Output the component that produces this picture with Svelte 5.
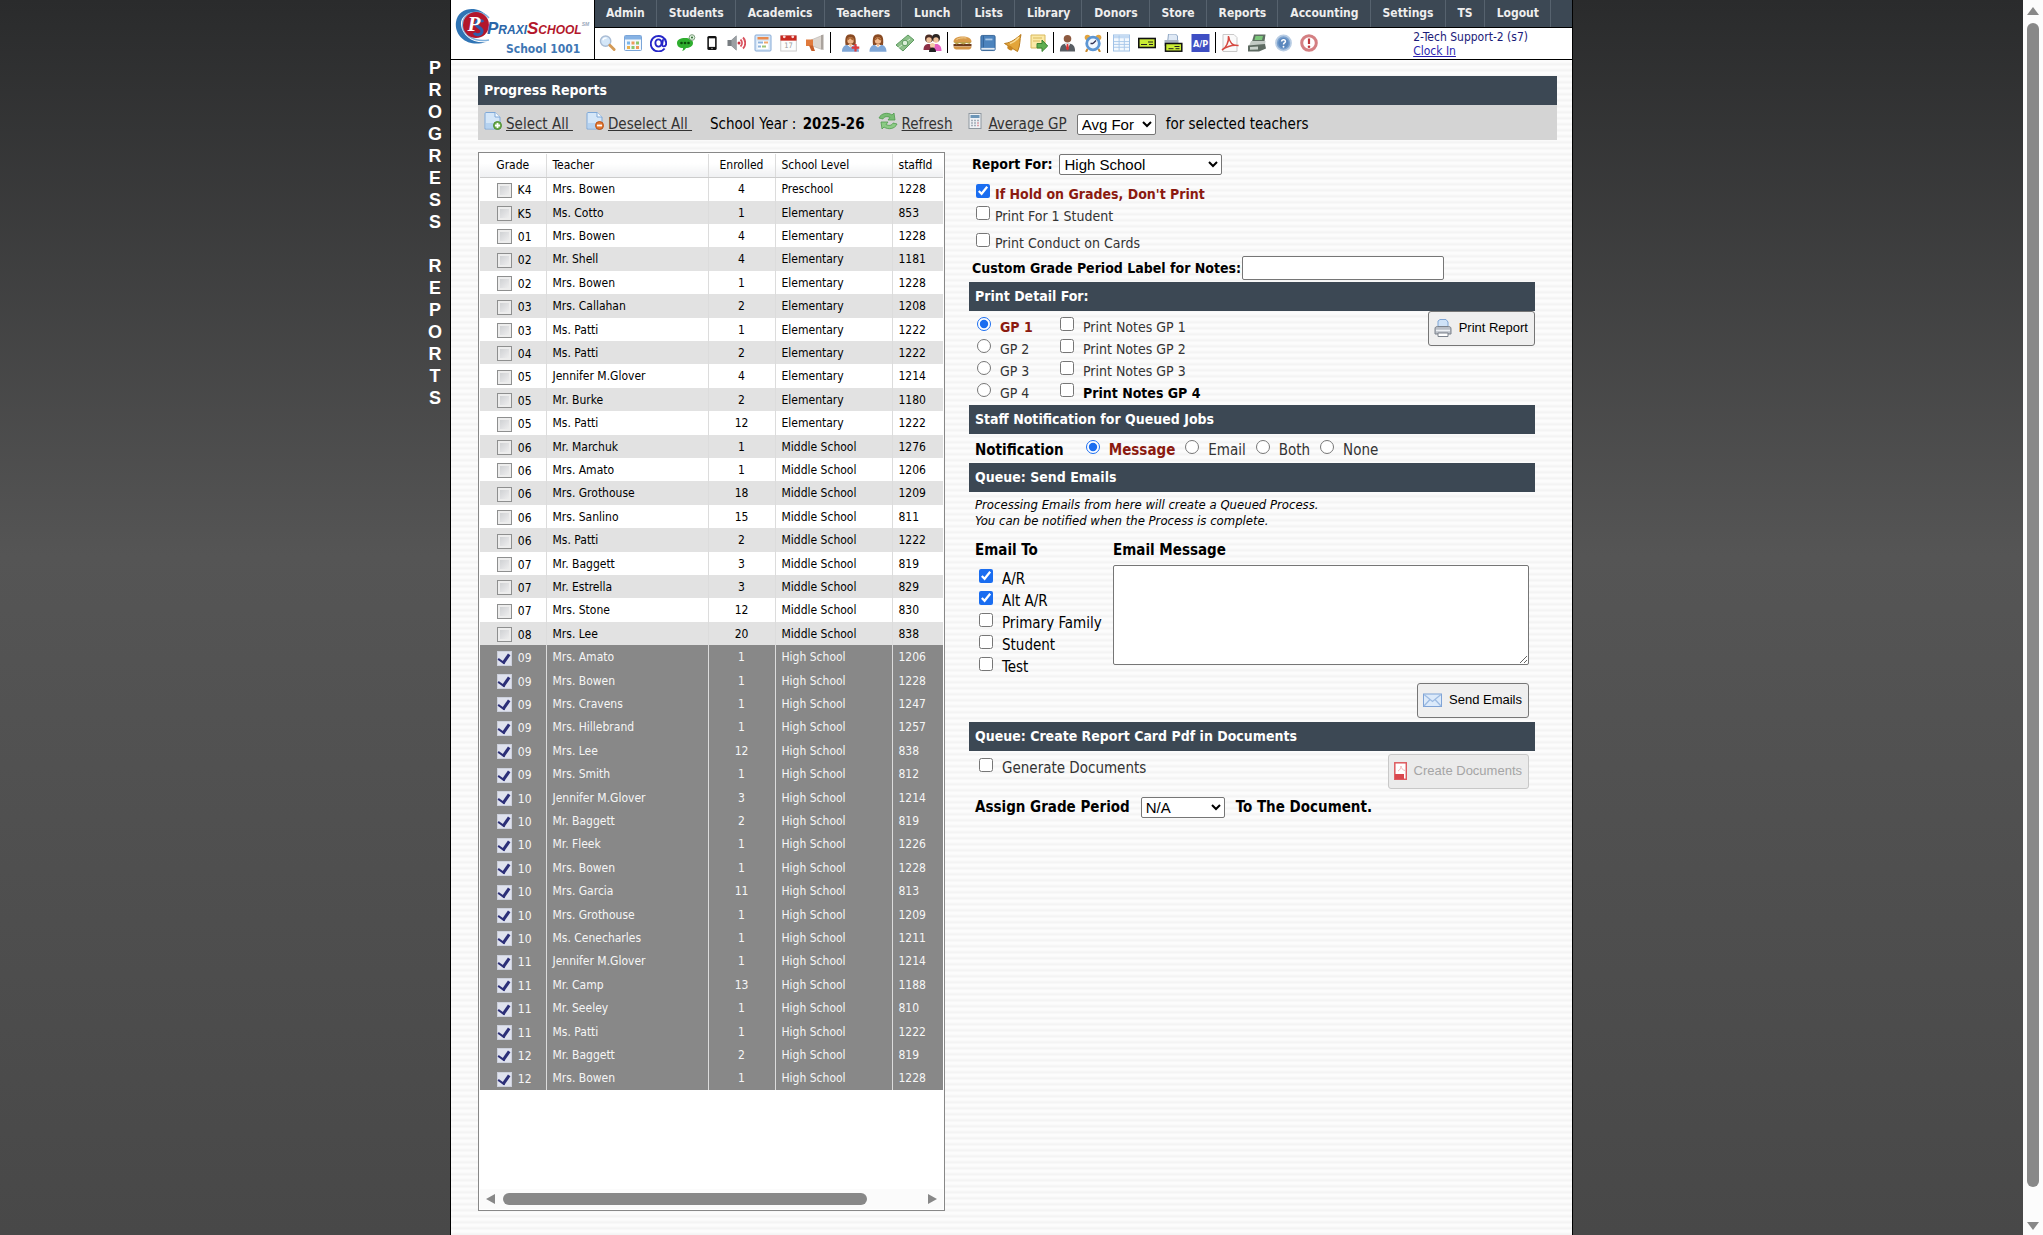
<script>
  const menu = ['Admin', 'Students', 'Academics', 'Teachers', 'Lunch', 'Lists', 'Library', 'Donors', 'Store', 'Reports', 'Accounting', 'Settings', 'TS', 'Logout'];

  // shortcut icons, grouped between the separators: [name, width]
  const shortcuts = [
    [['Search', 17], ['Dashboard', 18], ['Email', 17], ['Text', 22], ['Mobile', 14], ['Voice', 19], ['Schedule', 18], ['Calendar', 17], ['Announce', 20]],
    [['Add family', 21], ['Family', 18], ['Payments', 20], ['Groups', 19]],
    [['Lunch', 19], ['Book', 16], ['Bell', 18], ['Notes', 18]],
    [['Staff', 17], ['Clock', 18]],
    [['Ledger', 17], ['Check', 18], ['Print checks', 19], ['Payables', 19]],
    [['PDF', 18], ['Register', 20], ['Help', 17], ['Alert', 18]]
  ];

  const sideTitle = 'PROGRESS REPORTS'.split('');

  const E = 'Elementary';
  const M = 'Middle School';
  const H = 'High School';

  let teachers = $state(
    [
      ['K4', 'Mrs. Bowen', 4, 'Preschool', 1228],
      ['K5', 'Ms. Cotto', 1, E, 853],
      ['01', 'Mrs. Bowen', 4, E, 1228],
      ['02', 'Mr. Shell', 4, E, 1181],
      ['02', 'Mrs. Bowen', 1, E, 1228],
      ['03', 'Mrs. Callahan', 2, E, 1208],
      ['03', 'Ms. Patti', 1, E, 1222],
      ['04', 'Ms. Patti', 2, E, 1222],
      ['05', 'Jennifer M.Glover', 4, E, 1214],
      ['05', 'Mr. Burke', 2, E, 1180],
      ['05', 'Ms. Patti', 12, E, 1222],
      ['06', 'Mr. Marchuk', 1, M, 1276],
      ['06', 'Mrs. Amato', 1, M, 1206],
      ['06', 'Mrs. Grothouse', 18, M, 1209],
      ['06', 'Mrs. Sanlino', 15, M, 811],
      ['06', 'Ms. Patti', 2, M, 1222],
      ['07', 'Mr. Baggett', 3, M, 819],
      ['07', 'Mr. Estrella', 3, M, 829],
      ['07', 'Mrs. Stone', 12, M, 830],
      ['08', 'Mrs. Lee', 20, M, 838],
      ['09', 'Mrs. Amato', 1, H, 1206],
      ['09', 'Mrs. Bowen', 1, H, 1228],
      ['09', 'Mrs. Cravens', 1, H, 1247],
      ['09', 'Mrs. Hillebrand', 1, H, 1257],
      ['09', 'Mrs. Lee', 12, H, 838],
      ['09', 'Mrs. Smith', 1, H, 812],
      ['10', 'Jennifer M.Glover', 3, H, 1214],
      ['10', 'Mr. Baggett', 2, H, 819],
      ['10', 'Mr. Fleek', 1, H, 1226],
      ['10', 'Mrs. Bowen', 1, H, 1228],
      ['10', 'Mrs. Garcia', 11, H, 813],
      ['10', 'Mrs. Grothouse', 1, H, 1209],
      ['10', 'Ms. Cenecharles', 1, H, 1211],
      ['11', 'Jennifer M.Glover', 1, H, 1214],
      ['11', 'Mr. Camp', 13, H, 1188],
      ['11', 'Mr. Seeley', 1, H, 810],
      ['11', 'Ms. Patti', 1, H, 1222],
      ['12', 'Mr. Baggett', 2, H, 819],
      ['12', 'Mrs. Bowen', 1, H, 1228]
    ].map(([grade, name, enrolled, level, staffId]) => ({ grade, name, enrolled, level, staffId, selected: level === H }))
  );

  let period = $state(1);
  let notify = $state('Message');
  let hold = $state(true);
  let generate = $state(false);
  let emailTo = $state([
    { name: 'A/R', on: true },
    { name: 'Alt A/R', on: true },
    { name: 'Primary Family', on: false },
    { name: 'Student', on: false },
    { name: 'Test', on: false }
  ]);

  function selectAll(e, value) {
    e.preventDefault();
    teachers.forEach((t) => (t.selected = value));
  }
</script>

{#snippet glyph(name)}
  {#if name === 'Search'}
    <circle cx="7" cy="7" r="5.5" fill="#d3e6f8" stroke="#a9bcd4" stroke-width="1.5" />
    <path d="M4 6a3.5 3.5 0 0 1 4-2" stroke="#fff" stroke-width="1.5" fill="none" />
    <path d="M11.5 11.5l4.500 4.500" stroke="#d49a55" stroke-width="3" stroke-linecap="round" />
  {:else if name === 'Dashboard'}
    <rect x=".5" y="1.5" width="17" height="15" rx="1" fill="#f3f8fd" stroke="#7ba5d8" />
    <rect x="1" y="2" width="16" height="3.5" fill="#86b2e4" />
    <path d="M3 7.500h3v3H3z" fill="#7cb7e8" /><path d="M7.500 7.500h3v3h-3z" fill="#ef9a5a" /><path d="M12 7.500h3v3h-3z" fill="#8cc56c" />
    <path d="M3 12h3v3H3z" fill="#e9b14c" /><path d="M7.500 12h3v3h-3z" fill="#8cc56c" /><path d="M12 12h3v3h-3z" fill="#ef9a5a" />
  {:else if name === 'Email'}
    <path d="M15.500 14.800A8.200 8.200 0 1 1 17.200 9c0 2-1 3.600-2.500 3.600-1.400 0-2-1-1.700-2.600l.8-4.800" fill="none" stroke="#2626c8" stroke-width="2" />
    <ellipse cx="9" cy="9" rx="3.300" ry="3.800" fill="none" stroke="#2626c8" stroke-width="2" />
  {:else if name === 'Text'}
    <path d="M0 9c0-3.500 3.500-5 8-5s8 1.500 8 5-3.500 5-7 5c-1 2-3 3-4 3 1-1 1-2 1-3-4 0-6-2-6-5z" fill="#2fae2f" />
    <circle cx="4.500" cy="9" r="1.300" fill="#0b4f0b" /><circle cx="8" cy="9" r="1.300" fill="#0b4f0b" /><circle cx="11.500" cy="9" r="1.300" fill="#0b4f0b" />
    <circle cx="15" cy="3.500" r="2.800" fill="#dff2df" stroke="#7d9c7d" /><circle cx="15" cy="3.500" r="1" fill="#2a6b2a" />
  {:else if name === 'Mobile'}
    <rect x="3" y="0" width="12" height="18" rx="2" fill="#111" /><rect x="5" y="3" width="8" height="11" fill="#fff" /><circle cx="9" cy="16" r=".9" fill="#bbb" />
  {:else if name === 'Voice'}
    <path d="M0 6h4l5-4.500v15L4 12H0z" fill="#777c80" /><path d="M4 6l5-4.500v15L4 12z" fill="#9a9fa3" />
    <circle cx="11.500" cy="9" r="1.500" fill="#c8303e" />
    <path d="M13 5.500c2 2 2 5 0 7M15.500 3.500c3 3 3 8 0 11" fill="none" stroke="#d8505c" stroke-width="1.800" />
  {:else if name === 'Schedule'}
    <rect x="1" y="1" width="16" height="16" rx="1" fill="#d8e7f7" stroke="#86aad6" />
    <rect x="3.500" y="3" width="11" height="2.500" fill="#e98a4e" />
    <path d="M3.500 7h11v8h-11z" fill="#fff" /><path d="M4 7.500h5v2H4zM4 11.500h3v2H4z" fill="#8fb3dc" /><path d="M10 7.500h4v2h-4z" fill="#efa66c" /><path d="M8 11.500h4v2H8z" fill="#9cc477" />
  {:else if name === 'Calendar'}
    <rect x=".8" y="1.500" width="16.500" height="16" fill="#fdfdfd" stroke="#c9c9c9" />
    <rect x=".5" y="1" width="17" height="5.500" fill="#c8281f" />
    <circle cx="4.500" cy="2.500" r="1.500" fill="#f8d7d5" /><circle cx="13.500" cy="2.500" r="1.500" fill="#f8d7d5" />
    <text x="9" y="14.500" font-size="8" text-anchor="middle" fill="#999">17</text>
  {:else if name === 'Announce'}
    <path d="M5 6L16 1.500v14L5 11.500z" fill="#dcd6d0" stroke="#b9b2ab" stroke-width=".6" /><path d="M0 5.500h7V12H0z" fill="#e07a3c" /><path d="M3 11.500h4l2 5.500H5.500z" fill="#c65e28" />
    <path d="M15 1.200l2.500-.8v15.500L15 15z" fill="#aaa39d" />
  {:else if name === 'Add family' || name === 'Family'}
    <path d="M4 11C3 3 5 .3 9 .3S15 3 14 11z" fill="#8a4a22" />
    <circle cx="9" cy="6.500" r="3.200" fill="#f0b98d" /><path d="M5.500 6.500C6 2 12 2 12.500 6.500c-2-.3-3-1.300-4-2.300-.6 1-1.800 2-3 2.300z" fill="#a8622f" />
    <path d="M.5 17.700c0-5 3-6.700 5-7L9 13.500l3.500-2.800c2 .3 5 2 5 7z" fill="#7fa6d6" /><path d="M7 10h4l-2 3.200z" fill="#f0b98d" />
    {#if name === 'Add family'}<path d="M14 10v7.500M10.200 13.700h7.600" stroke="#e03a3a" stroke-width="2.200" />{/if}
  {:else if name === 'Payments'}
    <path d="M0 11L12 1l6 5L7 17z" fill="#8dc08a" stroke="#5d9a60" /><path d="M2 14L14 5" stroke="#d5ecd3" /><circle cx="9" cy="9" r="2.800" fill="#dcefda" stroke="#5d9a60" />
  {:else if name === 'Groups'}
    <circle cx="5.500" cy="4.500" r="4" fill="#4a2b22" /><circle cx="12.500" cy="4" r="4" fill="#2b2522" /><circle cx="5.500" cy="6" r="2.700" fill="#eec09a" /><circle cx="12.500" cy="6" r="2.700" fill="#eec09a" />
    <path d="M0 16c0-5 2.500-6 5.500-6S10 12 10 16z" fill="#8c2f45" /><path d="M9 17c0-6 1.500-7 4-7s5 2 5 7z" fill="#e45fc0" /><circle cx="9" cy="11.500" r="2.500" fill="#f3cda8" /><path d="M5.500 18c0-3 1.500-4.500 3.500-4.500s3.500 1.500 3.500 4.500z" fill="#222" />
  {:else if name === 'Lunch'}
    <path d="M0 8c0-4 4-5.500 9-5.500S18 4 18 8z" fill="#d89a4a" /><path d="M3 5.500C5 4 9 3.500 13 4" stroke="#f2cf90" fill="none" />
    <rect x="0" y="10" width="18" height="2.300" fill="#6b3a1c" /><path d="M0 8h18l-2 2-3-1-3 1.500L6 9l-3 1.500z" fill="#b9a04a" /><path d="M0 12.500h18c0 2.500-2 3-4 3H4c-2 0-4-.5-4-3z" fill="#d39445" />
  {:else if name === 'Book'}
    <rect x="1" y=".5" width="16" height="17" rx="1.500" fill="#4c83bd" stroke="#2f5f93" /><path d="M3.800 1v13" stroke="#2f5f93" /><rect x="1.500" y="14.500" width="15" height="2" fill="#e3eaf2" /><rect x="6" y="4" width="8" height="2" fill="#a9c8e8" />
  {:else if name === 'Bell'}
    <path d="M17 .5c-1.500 5-.5 11-3.500 17L.5 9.500C8 8.500 12 4.500 17 .5z" fill="#e3a53a" stroke="#b87a1c" /><ellipse cx="6" cy="14" rx="3" ry="2" fill="#c98622" transform="rotate(30 6 14)" /><path d="M6 9.500c4-1 7-4 9-6.500" stroke="#f9dc94" stroke-width="1.500" fill="none" />
  {:else if name === 'Notes'}
    <path d="M1 1h14v13H1z" fill="#fbe9a6" stroke="#d9b95c" /><path d="M3 4h9M3 7h7" stroke="#d9b95c" /><path d="M7 9.500h5V6l5.700 6-5.700 5.500V14H7z" fill="#5fae50" stroke="#3b8332" />
  {:else if name === 'Staff'}
    <circle cx="9" cy="4.500" r="4" fill="#8d5a40" /><path d="M1 18c0-6 2-8.500 8-8.500s8 2.500 8 8.500z" fill="#585d63" /><path d="M6 9.500h6L9 15z" fill="#fff" /><path d="M8.200 10h1.600l.8 5L9 17l-1.600-2z" fill="#d33" />
  {:else if name === 'Clock'}
    <circle cx="3.500" cy="3.500" r="2.800" fill="#e2a43f" /><circle cx="14.500" cy="3.500" r="2.800" fill="#e2a43f" /><path d="M3.500 15l-1.500 3M14.500 15l1.500 3" stroke="#c98a2e" stroke-width="2" />
    <circle cx="9" cy="9.500" r="6.300" fill="#f2f8ff" stroke="#5d96d3" stroke-width="2.800" /><path d="M9 9.500l3-3M9 9.500H6.500" stroke="#335" stroke-width="1.300" />
  {:else if name === 'Ledger'}
    <rect x=".5" y=".5" width="17" height="17" fill="#f4f9fe" stroke="#9cbfe6" /><path d="M1 1h16v3H1z" fill="#c3daf3" /><path d="M1 7.500h16M1 10.500h16M1 13.500h16M6.500 1v16M12 4v13" stroke="#a9c8ea" />
  {:else if name === 'Check'}
    <rect x=".8" y="4.500" width="16.500" height="9" fill="#cbed35" stroke="#111" stroke-width="1.600" /><path d="M10 8h5M3 10.500h6M11 10.500h4" stroke="#222" stroke-width="1.200" />
  {:else if name === 'Print checks'}
    <path d="M4 0h7l2 2v7H3z" fill="#dfe9f5" stroke="#8fa6c4" /><path d="M0 6h14v6H0z" fill="#a7b1bf" /><rect x="1" y="9.500" width="16.300" height="7.700" fill="#cbed35" stroke="#111" stroke-width="1.500" /><path d="M10 12.500h5M4 14.700h5M11 14.700h4" stroke="#222" />
  {:else if name === 'Payables'}
    <rect x="0" y="0" width="18" height="18" fill="#3f4fc4" /><text x="9" y="12.500" font-size="9" font-weight="700" text-anchor="middle" fill="#fff">A/P</text>
  {:else if name === 'PDF'}
    <path d="M2 .5h11l3 3v14H2z" fill="#fafafa" stroke="#c9c9c9" /><path d="M1 16c4-2 7-8 6.500-14 1 7 5 10 10 9.500-6-1-11 .5-16.500 4.500z" fill="none" stroke="#d64a42" stroke-width="1.500" />
  {:else if name === 'Register'}
    <path d="M6 .5h11.500l-1 7H4z" fill="#5f6f63" /><path d="M7.500 2H15l-1 4H6.500z" fill="#7bc67a" /><path d="M3 7h14.500L17 11 1 12z" fill="#c3cac5" /><path d="M0 11.500L17 10l1 4.500-7 3H0z" fill="#5e6b62" /><path d="M2 13l8-.5v3L2 15.700z" fill="#c9d1cb" />
  {:else if name === 'Help'}
    <circle cx="9" cy="9" r="8" fill="#7ba2cf" stroke="#b9cde4" stroke-width="1.800" /><circle cx="9" cy="9" r="5.500" fill="#5b88be" /><path d="M7 7.500C7 4.500 11.500 5 11 7.500c-.3 1.500-2 1.500-2 3" stroke="#fff" stroke-width="1.600" fill="none" /><circle cx="9" cy="13" r="1" fill="#fff" />
  {:else if name === 'Alert'}
    <circle cx="9" cy="9" r="7.300" fill="#fff" stroke="#d47f82" stroke-width="3" /><path d="M9 4.500v5.500" stroke="#c0393d" stroke-width="2.200" /><circle cx="9" cy="12.800" r="1.300" fill="#c0393d" />
  {/if}
{/snippet}

{#snippet pageIcon(minus)}
  <svg class="tool-icon" viewBox="0 0 18 18" aria-hidden="true">
    <path d="M1 1.500C1 1 1.500.5 2 .5h9L16 5v12H1z" fill="#d4e6f8" stroke="#7ea8d8" />
    <path d="M11 .5V5h5" fill="#f5faff" stroke="#7ea8d8" />
    <path d="M2 11h13v5H2z" fill="#b5d2f0" />
    <circle cx="13.500" cy="13.500" r="4" fill={minus ? '#e2762f' : '#6fae4c'} stroke={minus ? '#b9541a' : '#4b8a32'} />
    <path d={minus ? 'M11 13.500h5' : 'M11 13.500h5M13.500 11v5'} stroke="#fff" stroke-width="1.800" />
  </svg>
{/snippet}

<div class="page">
  <aside class="side">
    {#each sideTitle as letter}<span>{letter}</span>{/each}
  </aside>

  <div class="sheet">
    <header>
      <div class="logo">
        <svg viewBox="0 0 40 44" aria-hidden="true">
          <path d="M33 10C24-1 4 1 2 16c-2 14 12 26 30 20-12 2-24-6-25-17C6 8 20 2 33 10z" fill="#2f74b5" />
          <path d="M35 12C28 4 12 4 9 15c-3 12 10 22 26 19" fill="none" stroke="#7fb0dc" stroke-width="1.500" />
          <circle cx="22" cy="19" r="13" fill="#b3172c" />
          <path d="M20 27c2 3 8 2 8-2s-7-4-6-8 6-3 7-1" fill="none" stroke="#2d5fae" stroke-width="3" />
          <text x="20" y="25" font-size="21" font-style="italic" font-weight="700" font-family="Liberation Serif, serif" text-anchor="middle" fill="#fff">P</text>
        </svg>
        <div class="brand">
          <span class="brand-name">Praxi<b>School</b><sup>SM</sup></span>
          <span class="school">School 1001</span>
        </div>
      </div>
      <div class="bars">
        <nav>
          {#each menu as item}<a href="#{item}">{item}</a>{/each}
        </nav>
        <div class="shortcuts">
          {#each shortcuts as group, g}
            <div class="group" class:wide={g === 1}>
              {#each group as [name, width]}
                <a href="#{name}" title={name} aria-label={name}>
                  <svg viewBox="0 0 18 18" {width} height="18">{@render glyph(name)}</svg>
                </a>
              {/each}
            </div>
          {/each}
          <div class="user">
            <span>2-Tech Support-2 (s7)</span>
            <a href="#clock">Clock In</a>
          </div>
        </div>
      </div>
    </header>

    <main>
      <h1>Progress Reports</h1>
      <div class="toolbar">
        <a href="#all" class="first" onclick={(e) => selectAll(e, true)}>{@render pageIcon(false)}<u>Select All&nbsp;</u></a>
        <a href="#none" class="second" onclick={(e) => selectAll(e, false)}>{@render pageIcon(true)}<u>Deselect All&nbsp;</u></a>
        <span class="year">School Year : <b>2025-26</b></span>
        <a href="#refresh">
          <svg class="tool-icon refresh" viewBox="0 0 20 18" aria-hidden="true">
            <path d="M1 6c2-5 9-6 13-3l2-2 1 7h-7l2-2.500C9 4 6 4.500 5 7z" fill="#79bd74" stroke="#4f9a4c" stroke-width=".8" />
            <path d="M19 12c-2 5-9 6-13 3l-2 2-1-7h7l-2 2.500c3 1.500 6 1 7-1.500z" fill="#8ccb85" stroke="#4f9a4c" stroke-width=".8" />
          </svg>
          <u>Refresh</u>
        </a>
        <a href="#average" class="average">
          <svg class="tool-icon calc" viewBox="0 0 13 16" aria-hidden="true">
            <rect x=".5" y=".5" width="12" height="15" fill="#eef1f5" stroke="#8e979f" />
            <rect x="2" y="2" width="9" height="3" fill="#6d96b8" />
            <path d="M2.500 7.500h2M5.500 7.500h2M8.500 7.500h2M2.500 10h2M5.500 10h2M2.500 12.500h2M5.500 12.500h2" stroke="#a3adb8" stroke-width="1.300" />
            <path d="M8.500 10h2M8.500 12.500h2" stroke="#d9a0a8" stroke-width="1.300" />
          </svg>
          <u>Average GP</u>
        </a>
        <select class="avg" aria-label="Average for"><option>Avg For</option></select>
        <span class="after">for selected teachers</span>
      </div>

      <div class="columns">
        <section class="list">
          <table>
            <colgroup><col class="c-grade" /><col class="c-teacher" /><col class="c-enrolled" /><col class="c-level" /><col /></colgroup>
            <thead>
              <tr><th class="mid">Grade</th><th>Teacher</th><th class="mid">Enrolled</th><th>School Level</th><th>staffId</th></tr>
            </thead>
            <tbody>
              {#each teachers as t}
                <tr class:selected={t.selected}>
                  <td><label><input type="checkbox" bind:checked={t.selected} />{t.grade}</label></td>
                  <td>{t.name}</td>
                  <td class="mid">{t.enrolled}</td>
                  <td>{t.level}</td>
                  <td>{t.staffId}</td>
                </tr>
              {/each}
            </tbody>
          </table>
          <div class="hscroll" aria-hidden="true">
            <svg viewBox="0 0 9 12"><path d="M9 1v10L0 6z" /></svg>
            <div class="track"><div class="thumb"></div></div>
            <svg viewBox="0 0 9 12"><path d="M0 1v10l9-5z" /></svg>
          </div>
        </section>

        <form class="options" onsubmit={(e) => e.preventDefault()}>
          <div class="report-for">
            <label for="report-for">Report For:</label>
            <select id="report-for" class="level"><option>High School</option></select>
          </div>
          <div class="flags">
            <label class="opt" class:on={hold}><input type="checkbox" bind:checked={hold} />If Hold on Grades, Don't Print</label>
            <label class="opt"><input type="checkbox" />Print For 1 Student</label>
            <label class="opt spaced"><input type="checkbox" />Print Conduct on Cards</label>
          </div>
          <div class="custom">
            <label for="custom-label">Custom Grade Period Label for Notes:</label>
            <input id="custom-label" type="text" />
          </div>

          <h2>Print Detail For:</h2>
          <div class="detail">
            <div class="stack">
              {#each [1, 2, 3, 4] as n}
                <label class="opt" class:on={period === n}><input type="radio" name="period" value={n} bind:group={period} />GP {n}</label>
              {/each}
            </div>
            <div class="stack notes">
              {#each [1, 2, 3, 4] as n}
                <label class="opt" class:strong={n === 4}><input type="checkbox" />Print Notes GP {n}</label>
              {/each}
            </div>
            <button type="button">
              <svg viewBox="0 0 18 18" width="18" height="18" aria-hidden="true">
                <path d="M4 8V2l2-1.500h6L14 3v5z" fill="#cfe2f7" stroke="#7fa5d4" />
                <path d="M1 10c0-2 1-2.500 2.500-2.500h11C16 7.500 17 8 17 10v5H1z" fill="#b9bec6" stroke="#7c838d" />
                <path d="M2 11.500h14" stroke="#eef1f5" stroke-width="1.500" /><path d="M4 14h10v3.500H4z" fill="#fff" stroke="#7c838d" />
              </svg>
              Print Report
            </button>
          </div>

          <h2>Staff Notification for Queued Jobs</h2>
          <div class="notify">
            <b>Notification</b>
            {#each ['Message', 'Email', 'Both', 'None'] as kind}
              <label class="opt" class:on={notify === kind}><input type="radio" name="notify" value={kind} bind:group={notify} />{kind}</label>
            {/each}
          </div>

          <h2>Queue: Send Emails</h2>
          <p>Processing Emails from here will create a Queued Process.<br />You can be notified when the Process is complete.</p>
          <div class="emails">
            <b>Email To</b>
            <label for="message"><b>Email Message</b></label>
            <div class="stack recipients">
              {#each emailTo as r}
                <label class="opt"><input type="checkbox" bind:checked={r.on} />{r.name}</label>
              {/each}
            </div>
            <textarea id="message"></textarea>
          </div>
          <div class="send">
            <button type="button">
              <svg viewBox="0 0 19 18" width="19" height="18" aria-hidden="true">
                <rect x=".5" y="3" width="18" height="12.500" fill="#dceafa" stroke="#7fa3d6" /><path d="M1 3.500l8.500 7 8.500-7M1 15l6-6.500M18 15l-6-6.500" fill="none" stroke="#9dbbe2" stroke-width="1.300" />
              </svg>
              Send Emails
            </button>
          </div>

          <h2>Queue: Create Report Card Pdf in Documents</h2>
          <div class="generate">
            <label class="opt"><input type="checkbox" bind:checked={generate} />Generate Documents</label>
            <button type="button" disabled={!generate}>
              <svg viewBox="0 0 13 18" width="13" height="18" aria-hidden="true">
                <rect x=".8" y=".8" width="11.500" height="16.500" fill="#fff" stroke="#dd5a5f" stroke-width="1.500" /><path d="M1 12h9v5H1z" fill="#d9474d" /><path d="M4 9c2-1 3-3 3-5 0 2 1.500 4 4 4.500" fill="none" stroke="#f1b9bb" />
              </svg>
              Create Documents
            </button>
          </div>
          <div class="assign">
            <label for="assign">Assign Grade Period</label>
            <select id="assign"><option>N/A</option></select>
            <b>To The Document.</b>
          </div>
        </form>
      </div>
    </main>
  </div>

  <div class="vscroll" aria-hidden="true">
    <svg viewBox="0 0 12 10"><path d="M6 1l6 8H0z" /></svg>
    <div class="thumb"></div>
    <svg viewBox="0 0 12 10"><path d="M6 9L0 1h12z" /></svg>
  </div>
</div>

<style>
  :global(body) { margin: 0; }
  .page {
    --bar: #3c4854;
    --red: #8b1a10;
    --ui: 'DejaVu Sans Condensed', Tahoma, 'DejaVu Sans', sans-serif;
    --form: 'Liberation Sans', Arial, sans-serif;
    display: grid;
    grid-template-columns: 1fr minmax(0, 1123px) 1fr 20px;
    min-height: 100vh;
    font: 14px/22px var(--ui);
    color: #000;
    background: linear-gradient(#2a2b2c, #555 45%, #484848);
  }
  .page * { box-sizing: border-box; }

  .side {
    display: flex;
    flex-direction: column;
    align-items: flex-end;
    padding: 57px 8px 0 0;
    color: #fff;
    font: bold 18px/22px var(--form);
  }
  .side span { width: 14px; height: 22px; text-align: center; }

  .sheet {
    grid-column: 2;
    border: solid #000;
    border-width: 0 1px;
    background: repeating-linear-gradient(#fcfcfc 0 2px, #f4f4f4 4px 5px, #fcfcfc 6px);
  }

  header { display: flex; height: 60px; background: #fff; border-bottom: 1px solid #000; }
  .logo { display: flex; flex: none; width: 144px; padding: 6px 0 0 3px; border-right: 1px solid #000; }
  .logo svg { flex: none; width: 40px; height: 44px; }
  .brand { display: flex; flex-direction: column; align-items: flex-end; margin-left: -7px; padding-top: 13px; }
  .brand-name { color: #2b66a8; font: italic bold 17px/20px var(--form); font-variant: small-caps; white-space: nowrap; }
  .brand-name b { color: #b3172c; }
  .brand-name sup { font-size: 5px; color: #9ab; line-height: 1px; vertical-align: 8px; }
  .school { padding-right: 9px; color: #3f77b4; font-size: 12px; line-height: 20px; font-weight: bold; }

  .bars { flex: 1; min-width: 0; }
  nav { display: flex; gap: 1px; height: 28px; background: var(--bar); border-bottom: 1px solid #000; }
  nav a { padding: 0 11px; border-right: 1px solid #56626e; color: #eee; font-size: 12px; line-height: 27px; font-weight: bold; text-decoration: none; }
  .shortcuts { display: flex; align-items: center; height: 29px; padding-left: 4px; }
  .group { display: flex; align-items: center; gap: 8px; height: 21px; }
  .group + .group { margin-left: 5px; padding-left: 5px; border-left: 1px solid #000; }
  .group.wide { padding-left: 9px; }
  .group a { display: flex; }
  .user { display: flex; flex-direction: column; margin: 2px 44px 0 auto; color: #1a1a78; font-size: 12px; line-height: 14px; }
  .user a { color: #2a1fb0; }

  main { padding: 16px 15px 0 27px; }
  h1, h2 { margin: 0; padding-left: 6px; background: var(--bar); color: #fff; font-size: 14px; line-height: 29px; font-weight: bold; }
  .toolbar { display: flex; align-items: center; height: 35px; padding: 3px 6px 0; background: #d4d4d4; font-size: 15px; white-space: nowrap; }
  .toolbar a { display: flex; align-items: center; gap: 4px; color: #333; text-decoration: none; }
  .tool-icon { width: 18px; height: 18px; margin-bottom: 6px; }
  .tool-icon.refresh { width: 20px; }
  .tool-icon.calc { width: 14px; height: 16px; margin-right: 2px; }
  .first { margin-right: 13px; }
  .second { margin-right: 18px; }
  .year { margin-right: 13px; }
  .year b { margin-left: 2px; }
  .average { margin-left: 16px; }
  .avg { width: 79px; margin: 0 10px; }

  .columns { display: flex; align-items: flex-start; gap: 24px; padding-top: 12px; }
  .list { display: flex; flex-direction: column; flex: none; width: 467px; min-height: 1059px; padding: 1px; border: 1px solid #888; background: #fff; }
  table { width: 100%; border-collapse: collapse; table-layout: fixed; font-size: 12px; line-height: 16px; }
  .c-grade { width: 66px; }
  .c-teacher { width: 162px; }
  .c-enrolled { width: 67px; }
  .c-level { width: 117px; }
  th, td { padding: 0 0 0 6px; border-right: 1px solid #dcdcdc; text-align: left; font-weight: normal; }
  th:last-child, td:last-child { border-right: 0; }
  th { height: 23px; background: linear-gradient(#fff 40%, #eff0f2); border-bottom: 1px solid #ccc; }
  .mid { padding: 0; text-align: center; }
  tbody tr { height: 23px; }
  tbody tr:nth-child(5n + 1), tbody tr:nth-child(5n + 4) { height: 24px; }
  tbody tr:nth-child(even) { background: #e2e2e2; }
  tbody tr.selected { background: #888; color: #f6f6f6; }
  td label { display: flex; align-items: center; justify-content: flex-end; gap: 6px; padding: 2px 14px 0 0; }
  td input {
    appearance: none;
    display: grid;
    place-items: center;
    width: 15px;
    height: 15px;
    margin: 0;
    border: 1px solid #8e8f8f;
    background: linear-gradient(135deg, #c9cbce, #f4f4f4);
    box-shadow: inset 0 0 0 2px #ededed;
  }
  td input:checked { border-color: #ccd0dc; background: #dfe2ee; box-shadow: none; }
  td input:checked::after { content: ''; width: 5px; height: 9px; margin-bottom: 3px; border: solid #2c2f78; border-width: 0 3px 2px 0; transform: rotate(35deg); }

  .hscroll { display: flex; align-items: center; gap: 8px; margin-top: auto; height: 20px; padding: 0 6px; background: #fbfbfb; }
  .hscroll svg { width: 9px; height: 12px; fill: #888; }
  .hscroll .track { flex: 1; padding-right: 53px; }
  .thumb { height: 12px; border-radius: 6px; background: #888; }

  .options { flex: 1; min-width: 0; margin-right: 22px; padding-top: 1px; }
  select { height: 21px; margin: 0; border: 1px solid #767676; border-radius: 2px; background: #fff; color: #000; font: 15px var(--form); }
  .report-for, .custom { display: flex; align-items: center; padding-left: 3px; font-weight: bold; }
  .report-for { gap: 7px; }
  .level { width: 163px; }
  .flags { display: flex; flex-direction: column; margin: 8px 0 2px; padding-left: 7px; }
  .opt { display: flex; align-items: center; gap: 5px; height: 22px; color: #333; white-space: nowrap; }
  .opt input { flex: none; width: 14px; height: 14px; margin: 0 0 6px; accent-color: #1a6df0; }
  .opt.on { color: var(--red); font-weight: bold; }
  .opt.strong { color: #000; font-weight: bold; }
  .opt.spaced { margin: 5px 0 0; }
  .custom { gap: 1px; margin-bottom: 2px; }
  .custom input { width: 202px; height: 24px; border: 1px solid #767676; border-radius: 2px; background: #fff; }

  .detail { display: flex; align-items: flex-start; padding-left: 8px; }
  .stack { padding: 5px 0 1px; }
  .stack .opt { gap: 9px; }
  .detail .stack:first-child { width: 83px; }
  .detail button { margin-left: auto; }
  button { display: flex; align-items: center; gap: 7px; height: 35px; padding: 0 6px 2px 5px; border: 1px solid #767676; border-radius: 3px; background: #efefef; color: #000; font: 13px var(--form); white-space: nowrap; }
  button:disabled { border-color: #c8c8c8; background: #ebebeb; color: #a5a5a5; }
  .notify { display: flex; align-items: center; gap: 10px; height: 29px; padding: 2px 0 0 6px; font-size: 15px; }
  .notify b { margin-right: 12px; }
  .notify .opt { gap: 9px; }
  p { margin: 0; padding: 5px 6px 11px; font-size: 13px; line-height: 16px; font-style: italic; }
  .emails { display: grid; grid-template-columns: 138px 1fr; padding: 0 6px; font-size: 15px; line-height: 20px; }
  .recipients { margin-top: 3px; padding-left: 4px; }
  .recipients .opt { color: #000; }
  textarea { width: 100%; height: 100px; margin-top: 5px; border: 1px solid #767676; border-radius: 2px; background: #fff; }
  .send { display: flex; justify-content: flex-end; padding: 4px 6px; }
  .generate { display: flex; align-items: flex-start; justify-content: space-between; padding: 3px 6px 7px 10px; font-size: 15px; }
  .generate .opt { gap: 9px; margin-top: 3px; }
  .assign { display: flex; align-items: center; gap: 11px; padding-left: 6px; font-size: 15px; font-weight: bold; }
  .assign select { width: 84px; }

  .vscroll { grid-column: 4; display: flex; flex-direction: column; align-items: center; gap: 7px; height: 100vh; padding: 6px 4px 4px; background: #fcfcfc; }
  .vscroll svg { flex: none; width: 12px; height: 10px; fill: #888; }
  .vscroll .thumb { flex: 1; width: 12px; margin-bottom: 27px; }
</style>
